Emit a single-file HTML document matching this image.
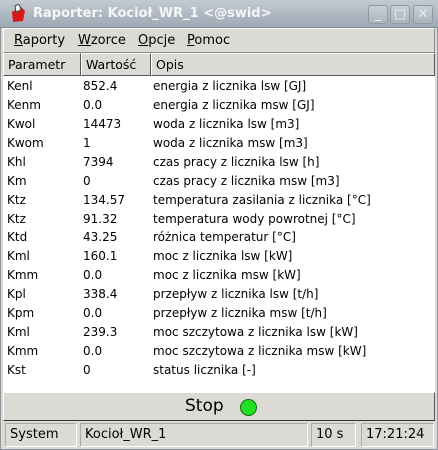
<!DOCTYPE html><html><head><style>
*{margin:0;padding:0;box-sizing:border-box}
body{width:438px;height:450px;overflow:hidden;background:#dcdad5;font-family:"DejaVu Sans","Liberation Sans",sans-serif;font-size:12px;color:#000;position:relative}
.tb{position:absolute;left:0;top:0;width:438px;height:28px;background:linear-gradient(#c3cad1,#9ea9b4);border-bottom:1px solid #7d8893}
.tb .t{position:absolute;left:33px;top:6px;color:#f4f6f8;font-weight:bold;font-size:13px}
.btn{position:absolute;top:5px;width:20px;height:19px;border:1px solid #8f9aa5;border-radius:3px;background:linear-gradient(#c8cfd6,#aab4be);color:#e8ecef;text-align:center;font-size:13px;line-height:17px}
.frame{position:absolute;left:0;top:28px;width:438px;height:422px;border:1px solid #8e959c;border-top:none}
.menu{position:absolute;left:3px;top:28px;width:432px;height:25px;border:1px solid #fff;border-right-color:#888;border-bottom-color:#888}
.menu span{position:absolute;top:4px;font-size:13px}
.hdr{position:absolute;top:53px;height:23px;border:1px solid #fff;border-right-color:#555;border-bottom-color:#555;padding:3px 0 0 4px;font-size:12.5px}
.list{position:absolute;left:3px;top:76px;width:432px;height:316px;background:#fff}
.r{position:absolute;height:18px;font-size:12px}
.stop{position:absolute;left:3px;top:392px;width:432px;height:29px;border:1px solid #fff;border-right-color:#555;border-bottom-color:#333;font-size:17px}
.sb{position:absolute;top:423px;height:24px;border:1px solid #aaa;border-right-color:#fff;border-bottom-color:#fff;padding:3px 0 0 4px;font-size:13px}
</style></head><body>
<div class="tb">
<svg style="position:absolute;left:9px;top:4px" width="18" height="20"><polygon points="3,8 12,3 16,7 14,17 4,18" fill="#d81818"/><polygon points="6,2 10,0 12,6 7,8" fill="#fff" stroke="#444" stroke-width="1"/></svg>
<div class="t">Raporter: Kocioł_WR_1 &lt;@swid&gt;</div>
<div class="btn" style="left:368px">_</div><div class="btn" style="left:390px">□</div><div class="btn" style="left:413px">✕</div>
</div>
<div class="frame"></div>
<div class="menu"><span style="left:10px"><u>R</u>aporty</span><span style="left:74px"><u>W</u>zorce</span><span style="left:134px"><u>O</u>pcje</span><span style="left:183px"><u>P</u>omoc</span></div>
<div class="hdr" style="left:3px;width:78px">Parametr</div>
<div class="hdr" style="left:81px;width:70px">Wartość</div>
<div class="hdr" style="left:151px;width:284px">Opis</div>
<div class="list">
<div id="rows"></div>
</div>
<div class="stop"><span style="position:absolute;left:181px;top:3px">Stop</span><div style="position:absolute;left:236px;top:6px;width:17px;height:17px;border-radius:50%;background:#22e022;border:1px solid #1a6a1a"></div></div>
<div class="sb" style="left:5px;width:72px">System</div>
<div class="sb" style="left:80px;width:228px">Kocioł_WR_1</div>
<div class="sb" style="left:311px;width:45px">10 s</div>
<div class="sb" style="left:361px;width:73px">17:21:24</div>
<script>
var d=[["Kenl","852.4","energia z licznika lsw [GJ]"],["Kenm","0.0","energia z licznika msw [GJ]"],["Kwol","14473","woda z licznika lsw [m3]"],["Kwom","1","woda z licznika msw [m3]"],["Khl","7394","czas pracy z licznika lsw [h]"],["Km","0","czas pracy z licznika msw [m3]"],["Ktz","134.57","temperatura zasilania z licznika [°C]"],["Ktz","91.32","temperatura wody powrotnej [°C]"],["Ktd","43.25","różnica temperatur [°C]"],["Kml","160.1","moc z licznika lsw [kW]"],["Kmm","0.0","moc z licznika msw [kW]"],["Kpl","338.4","przepływ z licznika lsw [t/h]"],["Kpm","0.0","przepływ z licznika msw [t/h]"],["Kml","239.3","moc szczytowa z licznika lsw [kW]"],["Kmm","0.0","moc szczytowa z licznika msw [kW]"],["Kst","0","status licznika [-]"]];
var h="";d.forEach(function(r,i){var t=3+i*18.93;h+='<div class="r" style="left:4px;top:'+t+'px">'+r[0]+'</div><div class="r" style="left:80px;top:'+t+'px">'+r[1]+'</div><div class="r" style="left:150px;top:'+t+'px">'+r[2]+'</div>';});
document.getElementById("rows").innerHTML=h;
</script>
</body></html>
